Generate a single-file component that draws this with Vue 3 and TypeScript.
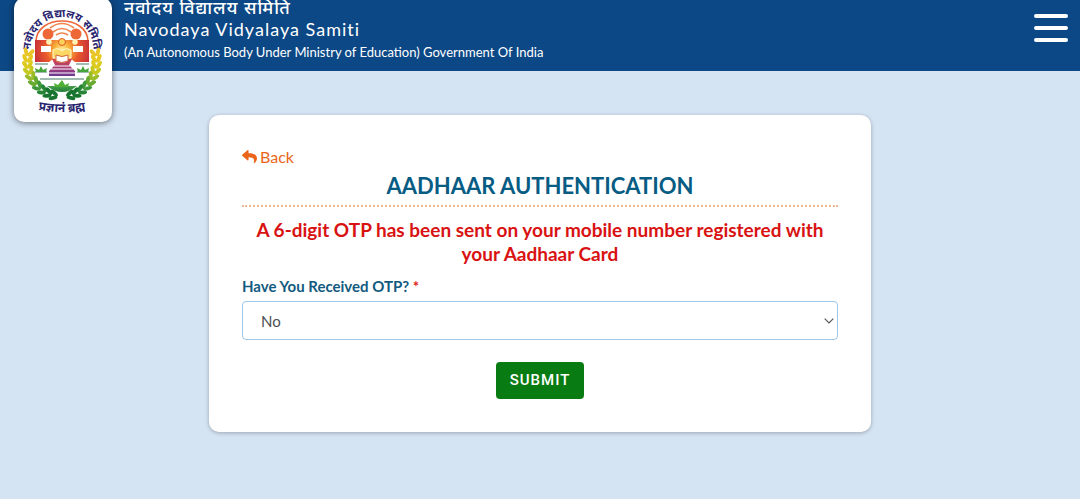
<script setup lang="ts">
import { ref } from 'vue'

interface Leaf {
  x: number
  y: number
  angle: number
  color: string
}

const answer = ref('No')
const answers: string[] = ['Yes', 'No']

const leafColors = ['#e9c428', '#e6c81f', '#dccb1e', '#c4c81f', '#9abb2a', '#68ab2f', '#3f983a', '#258436', '#17742f', '#17742f']

function wreath(side: 1 | -1): Leaf[] {
  return leafColors.flatMap((color, i) => {
    const t = ((-14 + i * 10) * Math.PI) / 180
    return [32, 37].map((r, j) => ({
      x: 48 + side * r * Math.cos(t),
      y: 61 + (r + 1) * Math.sin(t),
      angle: side * ((t * 180) / Math.PI + (j ? 28 : -28)),
      color,
    }))
  })
}

const leaves: Leaf[] = [...wreath(1), ...wreath(-1)]
</script>

<template>
  <div class="page">
    <header class="header">
      <div class="logo">
        <svg viewBox="0 0 98 122" role="img" aria-label="Navodaya Vidyalaya Samiti">
          <defs>
            <linearGradient id="body" x1="0" y1="58" x2="0" y2="78" gradientUnits="userSpaceOnUse">
              <stop offset="0" stop-color="#d8474a" />
              <stop offset=".5" stop-color="#a53a78" />
              <stop offset="1" stop-color="#5b3a9a" />
            </linearGradient>
            <radialGradient id="glow" cx="48" cy="50" r="30" gradientUnits="userSpaceOnUse">
              <stop offset="0" stop-color="#fff3a0" />
              <stop offset=".25" stop-color="#f8b33a" />
              <stop offset=".55" stop-color="#ea5a2b" />
              <stop offset="1" stop-color="#c22a3c" />
            </radialGradient>
            <linearGradient id="ground" x1="0" y1="84" x2="0" y2="93" gradientUnits="userSpaceOnUse">
              <stop offset="0" stop-color="#58a852" />
              <stop offset="1" stop-color="#187b34" />
            </linearGradient>
            <path id="arc-top" d="M16.500 51 A31.500 34 0 0 1 79.500 51" />
            <path id="arc-bottom" d="M16 108 Q48 116 80 108" />
          </defs>
          <text class="logo-text" font-size="11"><textPath href="#arc-top" startOffset="50%" text-anchor="middle">नवोदय विद्यालय समिति</textPath></text>
          <path d="M22 42C22 14 74 14 74 42" fill="none" stroke="#ed673b" stroke-width="1.600" />
          <path d="M36 28Q48 19 60 28M39 32Q48 25 57 32M42 35Q48 31 54 35" fill="none" stroke="#ef8650" stroke-width="1.600" />
          <path d="M21 40H75V62H61L57 59H39L35 62H21Z" fill="url(#glow)" />
          <circle cx="34" cy="34" r="5.500" fill="#ee6837" />
          <circle cx="62" cy="34" r="5.500" fill="#ee6837" />
          <path d="M27 46H37V52H27ZM59 46H69V52H59Z" fill="#fff" />
          <circle cx="35" cy="42" r="2.800" fill="#fff2b2" />
          <circle cx="61" cy="42" r="2.800" fill="#fff2b2" />
          <circle cx="48" cy="42" r="3.500" fill="#fbd257" stroke="#e8562e" />
          <path d="M39 50Q44 47 48 51Q52 47 57 50V58H39Z" fill="#fbd864" stroke="#fff9d2" />
          <path d="M38 59H58L55 65L61 71V76H35V71L41 65Z" fill="url(#body)" />
          <path d="M42 55Q48 58 54 55V61Q48 64 42 61Z" fill="#fff" stroke="#d0683a" />
          <path d="M40 66H56M37 69H59M34 73H62" stroke="#fff" stroke-width="1" />
          <path d="M21 64H34M62 64H75M21 72H33M63 72H75M26 79H70" stroke="#477967" stroke-width="1" />
          <path d="M22 72L21 68L25 70L27 66L29 70L33 68L32 72ZM64 72L63 68L67 70L69 66L71 70L75 68L74 72Z" fill="#44a33a" />
          <path d="M33 86H63Q48 98 33 86Z" fill="url(#ground)" />
          <path d="M41 87L40 83L44 85L48 80L51 85L55 83L54 87Z" fill="#4daf34" />
          <ellipse
            v-for="(leaf, i) in leaves"
            :key="i"
            :cx="leaf.x"
            :cy="leaf.y"
            rx="2"
            ry="4.500"
            :fill="leaf.color"
            :transform="`rotate(${leaf.angle} ${leaf.x} ${leaf.y})`"
          />
          <text class="logo-text" font-size="12"><textPath href="#arc-bottom" startOffset="50%" text-anchor="middle">प्रज्ञानं ब्रह्म</textPath></text>
        </svg>
      </div>
      <div class="titles">
        <div class="title-hi" lang="hi">नवोदय विद्यालय समिति</div>
        <div class="title-en">Navodaya Vidyalaya Samiti</div>
        <div class="subtitle">(An Autonomous Body Under Ministry of Education) Government Of India</div>
      </div>
      <button class="menu" type="button" aria-label="Menu">
        <span></span><span></span><span></span>
      </button>
    </header>

    <main class="card">
      <a class="back" href="#">
        <svg viewBox="0 0 512 448" aria-hidden="true">
          <path d="M8 145 184 -7C199 -20 224 -9 224 11V92C385 94 512 126 512 278C512 340 472 401 428 433C415 443 395 431 400 415C446 270 379 231 224 229V317C224 338 199 348 184 335L8 183C-3 173 -3 155 8 145Z" />
        </svg>
        Back
      </a>
      <h1>AADHAAR AUTHENTICATION</h1>
      <p class="notice">A 6-digit OTP has been sent on your mobile number registered with your Aadhaar Card</p>
      <form @submit.prevent>
        <label for="received">Have You Received OTP? <span class="required">*</span></label>
        <div class="select-wrap">
          <select id="received" v-model="answer">
            <option v-for="item in answers" :key="item" :value="item">{{ item }}</option>
          </select>
          <svg class="chevron" viewBox="0 0 10 6" aria-hidden="true"><path d="M.7 .7 5 5 9.300 .7" /></svg>
        </div>
        <button class="submit" type="submit">SUBMIT</button>
      </form>
    </main>
  </div>
</template>

<style>
body {
  margin: 0;
  background: #d5e4f3;
}
</style>

<style scoped>
.page {
  min-height: 100vh;
  overflow: hidden;
  background: #d5e4f3;
  font-family: Lato, "Noto Sans", sans-serif;
}
.page * {
  box-sizing: border-box;
}
.header {
  display: flex;
  align-items: flex-start;
  height: 81px;
  margin-top: -10px;
  padding: 8px 12px 0 14px;
  background: #0c4885;
  color: #fff;
}
.logo {
  flex: none;
  width: 98px;
  height: 124px;
  padding-top: 2px;
  border-radius: 10px;
  background: #fff;
  box-shadow: 0 1px 6px rgba(0, 0, 0, .5);
}
.logo svg {
  display: block;
  width: 98px;
  height: 122px;
  overflow: visible;
}
.logo-text {
  fill: #28246f;
  font-family: "Noto Sans", "Noto Sans Devanagari", sans-serif;
  font-weight: 700;
}
.titles {
  flex: 1;
  min-width: 0;
  padding-left: 12px;
}
.title-hi {
  font-size: 18px;
  font-weight: 500;
  line-height: 18px;
  letter-spacing: 1px;
}
.title-en {
  font-size: 18px;
  line-height: 26px;
  letter-spacing: 1px;
}
.subtitle {
  font-size: 13px;
  line-height: 20px;
}
.menu {
  display: flex;
  flex-direction: column;
  gap: 8px;
  width: 34px;
  margin-top: 16px;
  padding: 0;
  border: 0;
  background: none;
}
.menu span {
  width: 34px;
  height: 4px;
  border-radius: 2px;
  background: #fff;
}
.card {
  max-width: 662px;
  margin: 44px auto;
  padding: 32px 33px 33px;
  border-radius: 10px;
  background: #fff;
  box-shadow: 0 1px 4px rgba(0, 0, 0, .28);
}
.back {
  display: flex;
  align-items: center;
  gap: 3px;
  width: max-content;
  color: #ea6519;
  font-size: 16px;
  line-height: 20px;
  text-decoration: none;
}
.back svg {
  width: 15px;
  height: 14px;
  overflow: visible;
  fill: currentColor;
}
h1 {
  margin: 0;
  padding: 5px 0;
  border-bottom: 2px dotted #f0b795;
  color: #075c84;
  font-size: 22px;
  font-weight: 700;
  line-height: 28px;
  text-align: center;
}
.notice {
  margin: 11px 0 10px;
  color: #d91212;
  font-size: 19px;
  font-weight: 700;
  line-height: 24px;
  text-align: center;
}
label {
  display: block;
  margin-bottom: 5px;
  color: #125a80;
  font-size: 15px;
  font-weight: 700;
  line-height: 20px;
}
.required {
  color: #e02020;
}
.select-wrap {
  position: relative;
}
select {
  display: block;
  width: 100%;
  height: 39px;
  padding: 0 18px;
  appearance: none;
  border: 1px solid #a0c8e4;
  border-radius: 4px;
  background: #fff;
  color: #4b4f54;
  font: 15px Lato, sans-serif;
}
.chevron {
  position: absolute;
  top: 17px;
  right: 4px;
  width: 10px;
  height: 6px;
  overflow: visible;
  fill: none;
  stroke: #555;
  stroke-width: 1.200;
  pointer-events: none;
}
.submit {
  display: block;
  margin: 22px auto 0;
  padding: 0 14px;
  border: 0;
  border-radius: 4px;
  background: #087c12;
  color: #fff;
  font: 500 15px/37px Roboto, sans-serif;
  letter-spacing: 1px;
}
</style>
